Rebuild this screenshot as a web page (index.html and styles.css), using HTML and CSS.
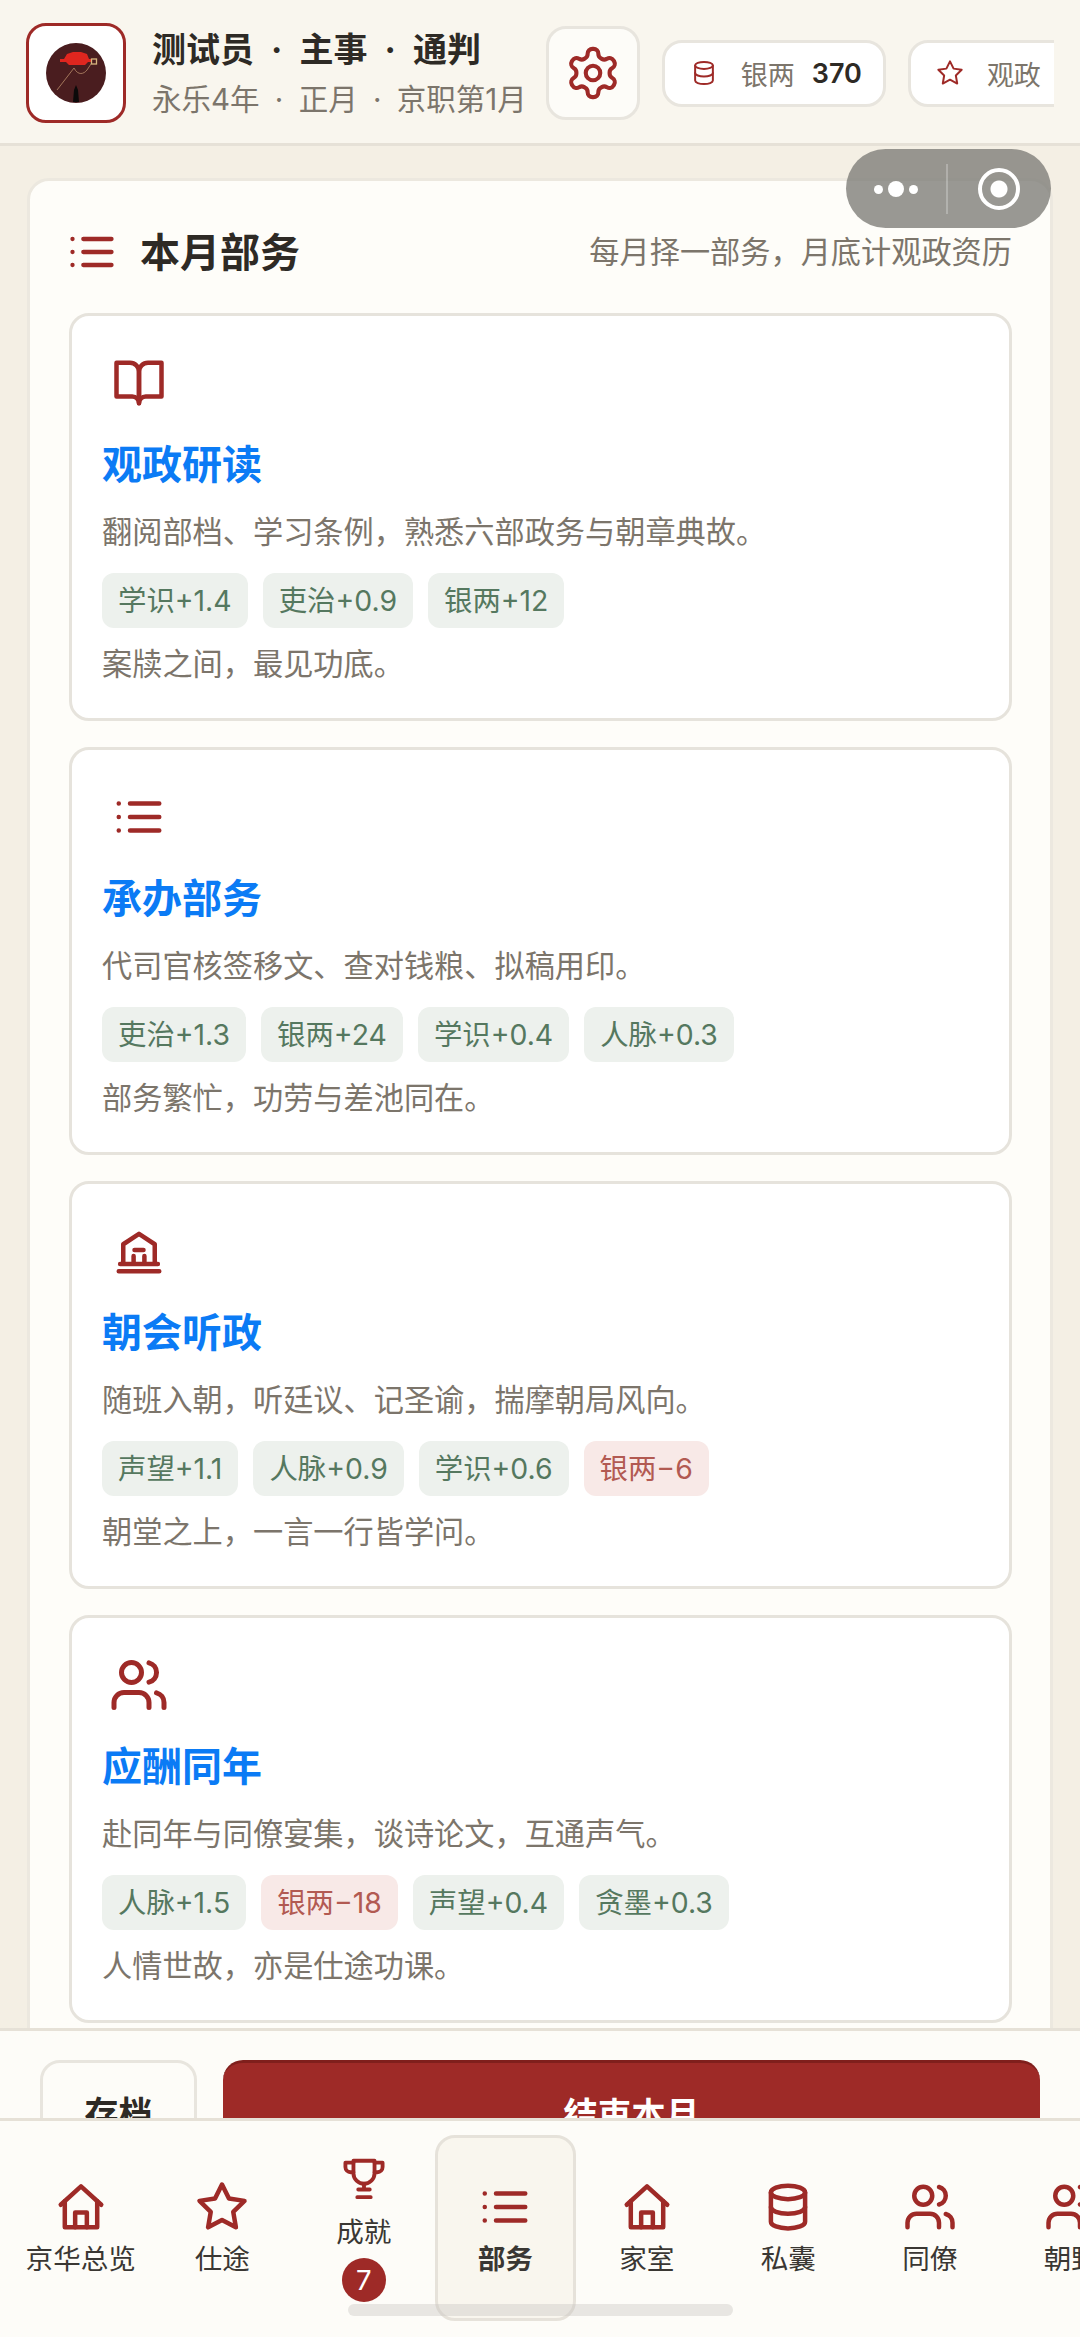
FILE: index.html
```html
<!DOCTYPE html>
<html lang="zh-CN">
<head>
    <meta charset="UTF-8">
    <meta name="viewport" content="width=device-width, initial-scale=1.0">
    <title>本月部务</title>
    <link rel="stylesheet" href="styles.css">
</head>
<body>
    <svg class="icon-defs" aria-hidden="true">
        <symbol id="i-list" viewBox="0 0 24 24">
            <path d="M8 6h13M8 12h13M8 18h13M3 6h.01M3 12h.01M3 18h.01"/>
        </symbol>
        <symbol id="i-book" viewBox="0 0 24 24">
            <path d="M2 3h6a4 4 0 0 1 4 4v14a3 3 0 0 0-3-3H2z"/>
            <path d="M22 3h-6a4 4 0 0 0-4 4v14a3 3 0 0 1 3-3h7z"/>
        </symbol>
        <symbol id="i-hall" viewBox="0 0 24 24">
            <path d="M5 17.6V9l7-4.6L19 9v8.6"/>
            <path d="M3.6 17.8h16.8M3 21h18M10 11.5h4M9.600 14.2v3.4M14.400 14.2v3.4"/>
        </symbol>
        <symbol id="i-users" viewBox="0 0 24 24">
            <circle cx="9" cy="7" r="4"/>
            <path d="M2 21v-2a4 4 0 0 1 4-4h6a4 4 0 0 1 4 4v2"/>
            <path d="M16 3.13a4 4 0 0 1 0 7.75"/>
            <path d="M22 21v-2a4 4 0 0 0-3-3.87"/>
        </symbol>
        <symbol id="i-home" viewBox="0 0 24 24">
            <path d="M3 11l9-8.2 9 8.2"/>
            <path d="M4.8 9.4V21h14.4V9.4"/>
            <path d="M9.4 21v-6.6h5.2V21"/>
        </symbol>
        <symbol id="i-star" viewBox="0 0 24 24">
            <path d="M12 2l3.09 6.26L22 9.27l-5 4.87 1.18 6.88L12 17.77l-6.18 3.25L7 14.14 2 9.27l6.91-1.01z"/>
        </symbol>
        <symbol id="i-coins" viewBox="0 0 24 24">
            <ellipse cx="12" cy="5.5" rx="7.6" ry="3"/>
            <path d="M4.4 5.5v13c0 1.7 3.4 3 7.6 3s7.6-1.3 7.6-3v-13"/>
            <path d="M4.4 12c0 1.7 3.4 3 7.6 3s7.6-1.3 7.6-3"/>
        </symbol>
        <symbol id="i-trophy" viewBox="0 0 24 24">
            <path d="M6.5 3h11v6.5a5.500 5.500 0 0 1-11 0z"/>
            <path d="M6.500 9H5a2.700 2.700 0 0 1-2.700-2.700V4h4.200M17.500 9H19a2.700 2.700 0 0 0 2.700-2.700V4h-4.200"/>
            <path d="M12 15v3M9 18h6M8.500 22h7"/>
        </symbol>
        <symbol id="i-gear" viewBox="0 0 24 24">
            <path d="M12.220 2h-.44a2 2 0 0 0-2 2v.18a2 2 0 0 1-1 1.730l-.43.25a2 2 0 0 1-2 0l-.15-.08a2 2 0 0 0-2.730.73l-.22.38a2 2 0 0 0 .73 2.730l.15.1a2 2 0 0 1 1 1.720v.51a2 2 0 0 1-1 1.740l-.15.09a2 2 0 0 0-.73 2.730l.22.38a2 2 0 0 0 2.730.73l.15-.08a2 2 0 0 1 2 0l.43.25a2 2 0 0 1 1 1.730V20a2 2 0 0 0 2 2h.44a2 2 0 0 0 2-2v-.18a2 2 0 0 1 1-1.730l.43-.25a2 2 0 0 1 2 0l.15.08a2 2 0 0 0 2.730-.73l.22-.39a2 2 0 0 0-.73-2.730l-.15-.08a2 2 0 0 1-1-1.740v-.5a2 2 0 0 1 1-1.740l.15-.09a2 2 0 0 0 .73-2.730l-.22-.38a2 2 0 0 0-2.730-.73l-.15.08a2 2 0 0 1-2 0l-.43-.25a2 2 0 0 1-1-1.730V4a2 2 0 0 0-2-2z"/>
            <circle cx="12" cy="12" r="3"/>
        </symbol>
    </svg>

    <header class="topbar">
        <div class="avatar">
            <svg viewBox="0 0 94 94" width="94" height="94">
                <circle cx="47" cy="47" r="30" fill="#4a1d1f"/>
                <path d="M45 42L28 64M45 42c4 8 10 6 13 2 2-3 4-6 6-9" fill="none" stroke="#b98c6a" stroke-width="0.8"/>
                <path d="M31 33h4l3-5 6-2h8l6 2 2 5h5v3h-6l-3 3H40l-3-3h-6z" fill="#e0261f"/>
                <rect x="62.500" y="33" width="5" height="5" fill="#4a1d1f" stroke="#d9b57e" stroke-width="1.300"/>
                <path d="M45 64l2-5 2 5 1 12h-6z" fill="#0c0a0a"/>
            </svg>
        </div>
        <div class="who">
            <div class="who-name">测试员 · 主事 · 通判</div>
            <div class="who-date">永乐4年 · 正月 · 京职第1月</div>
        </div>
        <button class="gear-btn"><svg class="icon gear-icon"><use href="#i-gear"/></svg></button>
        <div class="stat-scroll">
            <div class="stat-chip">
                <svg class="icon stat-icon"><use href="#i-coins"/></svg>
                <span class="stat-label">银两</span>
                <span class="stat-value">370</span>
            </div>
            <div class="stat-chip">
                <svg class="icon stat-icon"><use href="#i-star"/></svg>
                <span class="stat-label">观政</span>
                <span class="stat-value">0</span>
            </div>
        </div>
    </header>

    <!-- mini program capsule -->
    <div class="capsule">
        <div class="capsule-dots"><i></i><i class="big"></i><i></i></div>
        <div class="capsule-line"></div>
        <div class="capsule-ring"></div>
    </div>

    <main class="page">
        <section class="panel">
            <div class="panel-head">
                <svg class="icon panel-icon"><use href="#i-list"/></svg>
                <h1>本月部务</h1>
                <p>每月择一部务，月底计观政资历</p>
            </div>

            <article class="duty">
                <svg class="icon duty-icon"><use href="#i-book"/></svg>
                <h2>观政研读</h2>
                <p class="duty-desc">翻阅部档、学习条例，熟悉六部政务与朝章典故。</p>
                <div class="tags">
                    <span class="tag">学识+1.4</span>
                    <span class="tag">吏治+0.9</span>
                    <span class="tag">银两+12</span>
                </div>
                <p class="duty-note">案牍之间，最见功底。</p>
            </article>

            <article class="duty">
                <svg class="icon duty-icon"><use href="#i-list"/></svg>
                <h2>承办部务</h2>
                <p class="duty-desc">代司官核签移文、查对钱粮、拟稿用印。</p>
                <div class="tags">
                    <span class="tag">吏治+1.3</span>
                    <span class="tag">银两+24</span>
                    <span class="tag">学识+0.4</span>
                    <span class="tag">人脉+0.3</span>
                </div>
                <p class="duty-note">部务繁忙，功劳与差池同在。</p>
            </article>

            <article class="duty">
                <svg class="icon duty-icon"><use href="#i-hall"/></svg>
                <h2>朝会听政</h2>
                <p class="duty-desc">随班入朝，听廷议、记圣谕，揣摩朝局风向。</p>
                <div class="tags">
                    <span class="tag">声望+1.1</span>
                    <span class="tag">人脉+0.9</span>
                    <span class="tag">学识+0.6</span>
                    <span class="tag tag-minus">银两−6</span>
                </div>
                <p class="duty-note">朝堂之上，一言一行皆学问。</p>
            </article>

            <article class="duty">
                <svg class="icon duty-icon duty-icon-lg"><use href="#i-users"/></svg>
                <h2>应酬同年</h2>
                <p class="duty-desc">赴同年与同僚宴集，谈诗论文，互通声气。</p>
                <div class="tags">
                    <span class="tag">人脉+1.5</span>
                    <span class="tag tag-minus">银两−18</span>
                    <span class="tag">声望+0.4</span>
                    <span class="tag">贪墨+0.3</span>
                </div>
                <p class="duty-note">人情世故，亦是仕途功课。</p>
            </article>
        </section>
    </main>

    <div class="action-bar">
        <button class="btn-save">存档</button>
        <button class="btn-end">结束本月</button>
    </div>

    <nav class="tabbar">
        <a class="tab"><svg class="icon tab-icon"><use href="#i-home"/></svg><span>京华总览</span></a>
        <a class="tab"><svg class="icon tab-icon"><use href="#i-star"/></svg><span>仕途</span></a>
        <a class="tab tab-badged"><svg class="icon tab-icon-sm"><use href="#i-trophy"/></svg><span>成就</span><b class="badge">7</b></a>
        <a class="tab active"><svg class="icon tab-icon"><use href="#i-list"/></svg><span>部务</span></a>
        <a class="tab"><svg class="icon tab-icon"><use href="#i-home"/></svg><span>家室</span></a>
        <a class="tab"><svg class="icon tab-icon"><use href="#i-coins"/></svg><span>私囊</span></a>
        <a class="tab"><svg class="icon tab-icon"><use href="#i-users"/></svg><span>同僚</span></a>
        <a class="tab"><svg class="icon tab-icon"><use href="#i-users"/></svg><span>朝野</span></a>
    </nav>

    <div class="home-bar"></div>
</body>
</html>
```

FILE: styles.css
```css
* {
    box-sizing: border-box;
}
html, body {
    margin: 0;
    padding: 0;
}
body {
    position: relative;
    display: flex;
    flex-direction: column;
    width: 1080px;
    height: 2337px;
    overflow: hidden;
    font-family: Inter, "Noto Sans CJK SC", sans-serif;
    color: #2e2a25;
    background-color: #f4efe4;
}
h1, h2, p {
    margin: 0;
}
button {
    font-family: inherit;
    padding: 0;
}
.icon-defs {
    display: none;
}
.icon {
    flex-shrink: 0;
    fill: none;
    stroke: #9e2a27;
    stroke-width: 2;
    stroke-linecap: round;
    stroke-linejoin: round;
}

/* top bar */
.topbar {
    flex-shrink: 0;
    display: flex;
    align-items: center;
    height: 146px;
    padding: 3px 26px 0;
    background-color: #f9f6ee;
    border-bottom: 3px solid #e6e1d7;
}
.avatar {
    flex-shrink: 0;
    width: 100px;
    height: 100px;
    border: 3px solid #9e2a27;
    border-radius: 20px;
    background: white;
    overflow: hidden;
}
.avatar svg {
    display: block;
}
.who {
    flex-shrink: 0;
    margin-left: 26px;
    white-space: nowrap;
}
.who-name {
    font-size: 34px;
    line-height: 44px;
    font-weight: 700;
    word-spacing: 9px;
}
.who-date {
    margin-top: 7px;
    font-size: 29.5px;
    line-height: 40px;
    color: #7c756b;
    word-spacing: 7px;
}
.gear-btn {
    flex-shrink: 0;
    display: flex;
    align-items: center;
    justify-content: center;
    width: 94px;
    height: 94px;
    margin-left: 19px;
    border: 3px solid #e8e5de;
    border-radius: 20px;
    background-color: #fdfcf8;
}
.gear-icon {
    width: 58px;
    height: 58px;
    stroke-width: 1.7;
}
.stat-scroll {
    flex: 1;
    min-width: 0;
    display: flex;
    gap: 22px;
    margin-left: 22px;
    overflow: hidden;
}
.stat-chip {
    flex-shrink: 0;
    display: flex;
    align-items: center;
    height: 67px;
    padding: 0 21px 0 25px;
    border: 3px solid #e8e5de;
    border-radius: 20px;
    background: white;
}
.stat-icon {
    width: 28px;
    height: 28px;
    stroke-width: 1.7;
}
.stat-label {
    margin-left: 23px;
    font-size: 27px;
    color: #7c756b;
}
.stat-value {
    margin-left: 17px;
    font-size: 27px;
    font-weight: 600;
}

/* wechat capsule */
.capsule {
    position: absolute;
    top: 149px;
    left: 846px;
    width: 205px;
    height: 79px;
    border-radius: 40px;
    background-color: rgba(128, 126, 121, 0.8);
}
.capsule-dots {
    position: absolute;
    top: 32px;
    left: 28px;
    display: flex;
    align-items: center;
    gap: 5px;
    height: 16px;
}
.capsule-dots i {
    width: 9px;
    height: 9px;
    border-radius: 50%;
    background: white;
}
.capsule-dots i.big {
    width: 16px;
    height: 16px;
}
.capsule-line {
    position: absolute;
    top: 15px;
    left: 100px;
    width: 2px;
    height: 50px;
    background-color: rgba(255, 255, 255, 0.25);
}
.capsule-ring {
    position: absolute;
    top: 19px;
    left: 132px;
    width: 42px;
    height: 42px;
    border: 4px solid white;
    border-radius: 50%;
    background: radial-gradient(circle, white 8px, transparent 9px);
}

/* main panel */
.page {
    flex: 1;
    min-height: 0;
    padding: 32px 27px 0;
    overflow: hidden;
}
.panel {
    padding: 0 38px 40px 39px;
    border: 3px solid #ece8df;
    border-radius: 22px;
    background-color: #fefdf9;
}
.panel-head {
    display: flex;
    align-items: center;
    height: 132px;
    padding-top: 6px;
}
.panel-icon {
    width: 52px;
    height: 52px;
    margin-top: 3px;
    margin-left: -3px;
}
.panel-head h1 {
    margin-left: 22px;
    font-size: 40px;
    font-weight: 700;
}
.panel-head p {
    margin-left: auto;
    font-size: 30.2px;
    color: #7c756b;
}
.duty {
    display: flex;
    flex-direction: column;
    height: 408px;
    margin-bottom: 26px;
    padding: 40px 30px 0;
    border: 3px solid #e6e3dc;
    border-radius: 20px;
    background: white;
}
.duty-icon {
    width: 54px;
    height: 54px;
    margin-left: 10px;
    margin-bottom: 3px;
}
.duty-icon-lg {
    width: 60px;
    height: 60px;
    margin-top: -3px;
    margin-left: 7px;
    margin-bottom: 0;
}
.duty h2 {
    margin-top: 27px;
    font-size: 40px;
    line-height: 50px;
    font-weight: 700;
    color: #0b7bf5;
}
.duty-desc {
    margin-top: 22px;
    font-size: 30.2px;
    line-height: 40px;
    color: #7c756b;
}
.tags {
    display: flex;
    gap: 15px;
    margin-top: 21px;
}
.tag {
    height: 55px;
    padding: 0 16px;
    border-radius: 12px;
    font-size: 28.4px;
    line-height: 55px;
    color: #55785f;
    background-color: #edf1ed;
}
.tag-minus {
    color: #b25a52;
    background-color: #f8e9e7;
}
.duty-note {
    margin-top: 16px;
    font-size: 30.2px;
    line-height: 40px;
    color: #7c756b;
}

/* bottom buttons, cut off by the tab bar */
.action-bar {
    flex-shrink: 0;
    display: flex;
    gap: 26px;
    height: 90px;
    padding: 29px 40px 0;
    overflow: hidden;
    border-top: 3px solid #e6e1d7;
    background-color: #fdfcf8;
}
.btn-save {
    flex-shrink: 0;
    width: 157px;
    height: 102px;
    border: 3px solid #e8e5de;
    border-radius: 20px;
    font-size: 34px;
    font-weight: 700;
    color: #2e2a25;
    background-color: #fdfcf8;
}
.btn-end {
    flex: 1;
    height: 102px;
    border: 0;
    border-top: 3px solid #7f1f1c;
    border-radius: 20px;
    font-size: 34px;
    font-weight: 700;
    color: white;
    background-color: #9e2a27;
}

/* tab bar */
.tabbar {
    flex-shrink: 0;
    display: flex;
    height: 219px;
    padding: 14px 0 16px 10px;
    overflow: hidden;
    border-top: 3px solid #e6e1d7;
    background-color: #fdfcf8;
}
.tab {
    flex-shrink: 0;
    display: flex;
    flex-direction: column;
    align-items: center;
    justify-content: center;
    width: 141.5px;
    border: 3px solid transparent;
    border-radius: 20px;
    font-size: 27.6px;
    line-height: 36px;
    color: #3a3733;
}
.tab-icon {
    width: 54px;
    height: 54px;
    margin-bottom: 7px;
}
.tab-icon-sm {
    width: 46px;
    height: 46px;
    margin-bottom: 13px;
}
.tab.active {
    font-weight: 700;
    border-color: #e6e2da;
    background-color: #f9f6ee;
}
.badge {
    width: 44px;
    height: 44px;
    margin-top: 8px;
    border-radius: 50%;
    font-weight: 400;
    line-height: 44px;
    text-align: center;
    color: white;
    background-color: #9e2a27;
}

.home-bar {
    position: absolute;
    left: 348px;
    top: 2304px;
    width: 385px;
    height: 12px;
    border-radius: 6px;
    background-color: rgba(200, 198, 192, 0.4);
}
```
